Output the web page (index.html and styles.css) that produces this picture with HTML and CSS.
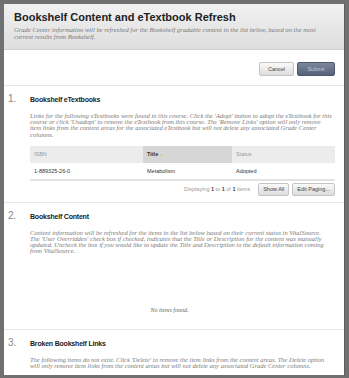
FILE: index.html
```html
<!DOCTYPE html>
<html lang="en">
<head>
  <meta charset="UTF-8" />
  <title>Bookshelf Content and eTextbook Refresh</title>
  <link rel="stylesheet" href="styles.css">
</head>
<body>

  <div class="panel">
    <div class="panel-scroll">
      <div class="page-header">
        <h1 class="page-title">Bookshelf Content and eTextbook Refresh</h1>
        <p class="page-desc">Grade Center information will be refreshed for the Bookshelf gradable content in the list below, based on the most<br>current results from Bookshelf.</p>
      </div>

      <div class="submit-bar">
        <button class="btn">Cancel</button>
        <button class="btn btn-primary">Submit</button>
      </div>

      <div class="step">
        <h2 class="step-title"><span class="step-num">1.</span> Bookshelf eTextbooks</h2>
        <p class="step-desc">Links for the following eTextbooks were found in this course. Click the 'Adopt' button to adopt the eTextbook for this<br>course or click 'Unadopt' to remove the eTextbook from this course. The 'Remove Links' option will only remove<br>item links from the content areas for the associated eTextbook but will not delete any associated Grade Center<br>columns.</p>
        <table class="list">
          <thead>
            <tr>
              <th class="col-isbn">ISBN</th>
              <th class="col-title sorted">Title <span class="sort-arrow">&#9650;</span></th>
              <th class="col-status">Status</th>
            </tr>
          </thead>
          <tbody>
            <tr>
              <td>1-889325-26-0</td>
              <td>Metabolism</td>
              <td>Adopted</td>
            </tr>
          </tbody>
        </table>
        <div class="paging">
          <span class="paging-info">Displaying <b>1</b> to <b>1</b> of <b>1</b> items</span>
          <button class="btn btn-small">Show All</button>
          <button class="btn btn-small">Edit Paging...</button>
        </div>
      </div>

      <div class="step">
        <h2 class="step-title"><span class="step-num">2.</span> Bookshelf Content</h2>
        <p class="step-desc">Content information will be refreshed for the items in the list below based on their current status in VitalSource.<br>The 'User Overridden' check box if checked, indicates that the Title or Description for the content was manually<br>updated. Uncheck the box if you would like to update the Title and Description to the default information coming<br>from VitalSource.</p>
        <p class="empty">No items found.</p>
      </div>

      <div class="step step-last">
        <h2 class="step-title"><span class="step-num">3.</span> Broken Bookshelf Links</h2>
        <p class="step-desc">The following items do not exist. Click 'Delete' to remove the item links from the content areas. The Delete option<br>will only remove item links from the content areas but will not delete any associated Grade Center columns.</p>
      </div>
    </div>
  </div>

</body>
</html>
```

FILE: styles.css
```css
* {
  margin: 0; padding: 0; box-sizing: border-box;
}
html, body {
  height: 100%; width: 100%;
  background: #707070;
  font-family: "Liberation Sans", Arial, sans-serif;
}
body {
  padding: 4px;
}

.panel {
  width: 341px; height: 371px;
  background: #fff;
  border-right: 1px solid #5d5d5d;
}

.panel-scroll {
  width: 100%; height: 100%;
  overflow: scroll;
}
.panel-scroll::-webkit-scrollbar { width: 4px; height: 4px; }
.panel-scroll::-webkit-scrollbar-track { background: #d9dde3; }
.panel-scroll::-webkit-scrollbar-thumb { background: #c9d0da; }
.panel-scroll::-webkit-scrollbar-corner { background: #cfd3d8; }

.page-header {
  height: 46px;
  padding: 7px 10px 0;
  background: linear-gradient(#f1f1f1, #dedede);
  border-bottom: 1px solid #d0d0d0;
}
.page-title {
  font-size: 11px; font-weight: bold;
  color: #222;
  line-height: 12px;
}
.page-desc {
  margin-top: 4px;
  font-family: "Liberation Serif", serif;
  font-style: italic;
  font-size: 6.6px; line-height: 6.5px;
  color: #777;
}

.submit-bar {
  display: flex; justify-content: flex-end; gap: 3px;
  height: 36px;
  padding: 12px 9px 0 0;
  border-bottom: 1px solid #e4e4e4;
}

.btn {
  height: 14px;
  padding: 0 5px;
  font-family: "Liberation Sans", Arial, sans-serif;
  font-size: 5.5px;
  color: #444;
  background: linear-gradient(#fafafa, #dcdcdc);
  border: 1px solid #c4c4c4;
  border-radius: 2px;
}
.submit-bar .btn { width: 35px; }
.submit-bar .btn-primary {
  width: 38px;
  color: #c7ccd6;
  background: linear-gradient(#7b879c, #56627a);
  border-color: #4d586c;
}

.step {
  padding: 9px 9px 6px 26px;
  border-bottom: 1px solid #e6e6e6;
}
.step-title {
  position: relative;
  font-size: 7px; font-weight: bold;
  color: #222;
  line-height: 10px;
  letter-spacing: -0.2px;
}
.step-num {
  position: absolute; left: -22px; top: -1px;
  font-size: 10px; font-weight: normal;
  color: #888;
}
.step-desc {
  margin-top: 8px;
  font-family: "Liberation Serif", serif;
  font-style: italic;
  font-size: 6.5px; line-height: 6.2px;
  color: #7a7a7a;
}

.list {
  width: 100%;
  margin-top: 8px;
  border-collapse: collapse;
  font-size: 5.5px;
  color: #333;
}
.list th {
  height: 17px;
  text-align: left; font-weight: normal;
  padding-left: 4px;
  color: #999;
  background: #ececec;
}
.list th.sorted {
  color: #333; font-weight: bold;
  background: #d6d6d6;
}
.col-isbn { width: 113px; }
.col-title { width: 89px; }
.sort-arrow {
  font-size: 4px; color: #e0c35a;
}
.list td {
  height: 17px;
  padding-left: 4px;
  border-bottom: 2px solid #e2e2e2;
}

.paging {
  display: flex; justify-content: flex-end; align-items: center; gap: 3px;
  margin-top: 2px;
  font-size: 5.5px;
  color: #999;
}
.paging-info { margin-right: 5px; }
.paging-info b { color: #444; font-weight: bold; }
.btn-small { height: 13px; padding: 0 4px; }

.empty {
  margin: 52px 0 10px -26px;
  text-align: center;
  font-family: "Liberation Serif", serif;
  font-style: italic;
  font-size: 6px;
  color: #666;
}

.step-last { border-bottom: none; }
```
